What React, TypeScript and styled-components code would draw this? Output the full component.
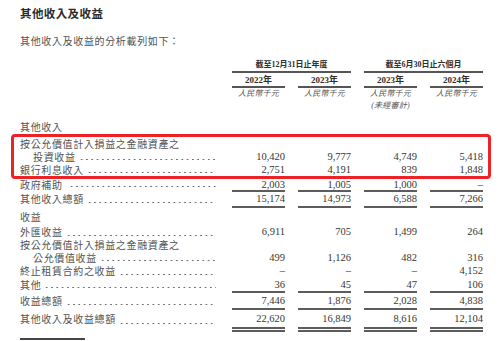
import styled, { createGlobalStyle } from "styled-components";

const GlobalStyle = createGlobalStyle`
  html, body {
    margin: 0;
    padding: 0;
    background: #fff;
  }
  body {
    width: 499px;
    height: 341px;
    overflow: hidden;
  }
`;

const Page = styled.div`
  padding: 5px 16px 0 20px;
  font-family: "Noto Sans CJK TC", sans-serif;
  color: #525252;
`;

const Heading = styled.h2`
  margin: 0;
  font-size: 11.5px;
  line-height: 16px;
  font-weight: 700;
  letter-spacing: 0.4px;
  color: #2b2b2b;
`;

const Intro = styled.p`
  margin: 13px 0 0;
  font-size: 10px;
  line-height: 14px;
  letter-spacing: 0.65px;
`;

const HeadGrid = styled.div`
  display: grid;
  grid-template-columns: 199px repeat(4, 53px);
  column-gap: 13px;
  margin-top: 11px;
  font-family: "Liberation Serif", "Noto Sans CJK TC", serif;
  color: #2e2e2e;
`;

const GroupTitle = styled.div<{ $col: number }>`
  grid-column: ${(p) => p.$col} / span 2;
  text-align: center;
  font-weight: 700;
  font-size: 8px;
  line-height: 12px;
  border-bottom: 2px solid #555;
`;

const Year = styled.div<{ $col: number }>`
  grid-column: ${(p) => p.$col};
  padding-top: 1px;
  text-align: center;
  font-weight: 700;
  font-size: 9px;
  line-height: 12px;
  border-bottom: 2px solid #555;
`;

const Unit = styled.div<{ $col: number }>`
  grid-column: ${(p) => p.$col};
  text-align: center;
  font-style: italic;
  font-size: 8px;
  line-height: 12px;
  letter-spacing: 0.2px;
  color: #555;
`;

const Body = styled.div`
  margin-top: 8px;
`;

const Row = styled.div<{ $h: number }>`
  display: grid;
  grid-template-columns: 199px repeat(4, 53px);
  column-gap: 13px;
  align-items: end;
  line-height: ${(p) => p.$h}px;
`;

const Cell = styled.div<{ $top?: boolean; $bottom?: "single" | "double" }>`
  border-top: ${(p) => (p.$top ? "2px solid #5c5c5c" : "0")};
  border-bottom: ${(p) =>
    p.$bottom === "double"
      ? "5px double #5c5c5c"
      : p.$bottom
      ? "2px solid #5c5c5c"
      : "0"};
`;

const Label = styled(Cell)<{ $indent?: boolean }>`
  border-color: transparent;
  display: flex;
  padding-left: ${(p) => (p.$indent ? 13 : 0)}px;
  padding-right: 3px;
  font-size: 10px;
  letter-spacing: 0.65px;
  white-space: nowrap;
`;

const Sup = styled.span`
  font-size: 6px;
  line-height: 0;
  position: relative;
  top: -4px;
`;

/* dotted leader drawn as a repeating dot pattern */
const Dots = styled.span`
  flex: 1;
  margin-left: 3px;
  background-image: radial-gradient(circle, #6e6e6e 0.75px, transparent 1.1px);
  background-size: 5.3px 3px;
  background-repeat: repeat-x;
  background-position: 0 calc(100% - 2px);
`;

const Value = styled(Cell)`
  text-align: right;
  font-family: "Liberation Serif", serif;
  font-size: 10.5px;
  color: #363636;
`;

const Highlight = styled.div`
  margin: 0 -8px 0 -9px;
  padding: 0 5px 0 6px;
  border: 3px solid #ec2227;
  border-radius: 4px;
`;

const FootRule = styled.div`
  margin-top: 6px;
  width: 65px;
  border-top: 2px solid #444;
`;

type Line = {
  label: string;
  h: number;
  indent?: boolean;
  dots?: boolean;
  sup?: string;
  values?: string[];
  top?: boolean;
  bottom?: "single" | "double";
};

const otherIncomeHead: Line[] = [{ label: "其他收入", h: 14 }];

const marked: Line[] = [
  { label: "按公允價值計入損益之金融資產之", h: 13 },
  {
    label: "投資收益",
    h: 13,
    indent: true,
    dots: true,
    values: ["10,420", "9,777", "4,749", "5,418"],
  },
  {
    label: "銀行利息收入",
    h: 13,
    dots: true,
    values: ["2,751", "4,191", "839", "1,848"],
  },
];

const rest: Line[] = [
  {
    label: "政府補助",
    sup: "*",
    h: 11,
    dots: true,
    values: ["2,003", "1,005", "1,000", "–"],
  },
  {
    label: "其他收入總額",
    h: 14,
    dots: true,
    top: true,
    bottom: "single",
    values: ["15,174", "14,973", "6,588", "7,266"],
  },
  { label: "收益", h: 17 },
  {
    label: "外匯收益",
    h: 14,
    dots: true,
    values: ["6,911", "705", "1,499", "264"],
  },
  { label: "按公允價值計入損益之金融資產之", h: 12 },
  {
    label: "公允價值收益",
    h: 13,
    indent: true,
    dots: true,
    values: ["499", "1,126", "482", "316"],
  },
  {
    label: "終止租賃合約之收益",
    h: 14,
    dots: true,
    values: ["–", "–", "–", "4,152"],
  },
  { label: "其他", h: 13, dots: true, values: ["36", "45", "47", "106"] },
  {
    label: "收益總額",
    h: 15,
    dots: true,
    top: true,
    bottom: "single",
    values: ["7,446", "1,876", "2,028", "4,838"],
  },
  {
    label: "其他收入及收益總額",
    h: 17,
    dots: true,
    bottom: "double",
    values: ["22,620", "16,849", "8,616", "12,104"],
  },
];

function TableLine({ line }: { line: Line }) {
  return (
    <Row $h={line.h}>
      <Label $indent={line.indent} $top={line.top} $bottom={line.bottom}>
        {line.label}
        {line.sup && <Sup>{line.sup}</Sup>}
        {line.dots && <Dots />}
      </Label>
      {line.values?.map((v, i) => (
        <Value key={i} $top={line.top} $bottom={line.bottom}>
          {v}
        </Value>
      ))}
    </Row>
  );
}

export default function App() {
  return (
    <>
      <GlobalStyle />
      <Page>
        <Heading>其他收入及收益</Heading>
        <Intro>其他收入及收益的分析載列如下：</Intro>
        <HeadGrid>
          <GroupTitle $col={2}>截至12月31日止年度</GroupTitle>
          <GroupTitle $col={4}>截至6月30日止六個月</GroupTitle>
          <Year $col={2}>2022年</Year>
          <Year $col={3}>2023年</Year>
          <Year $col={4}>2023年</Year>
          <Year $col={5}>2024年</Year>
          <Unit $col={2}>人民幣千元</Unit>
          <Unit $col={3}>人民幣千元</Unit>
          <Unit $col={4}>人民幣千元</Unit>
          <Unit $col={5}>人民幣千元</Unit>
          <Unit $col={4}>(未經審計)</Unit>
        </HeadGrid>
        <Body>
          {otherIncomeHead.map((l, i) => (
            <TableLine key={i} line={l} />
          ))}
          <Highlight>
            {marked.map((l, i) => (
              <TableLine key={i} line={l} />
            ))}
          </Highlight>
          {rest.map((l, i) => (
            <TableLine key={i} line={l} />
          ))}
        </Body>
        <FootRule />
      </Page>
    </>
  );
}
